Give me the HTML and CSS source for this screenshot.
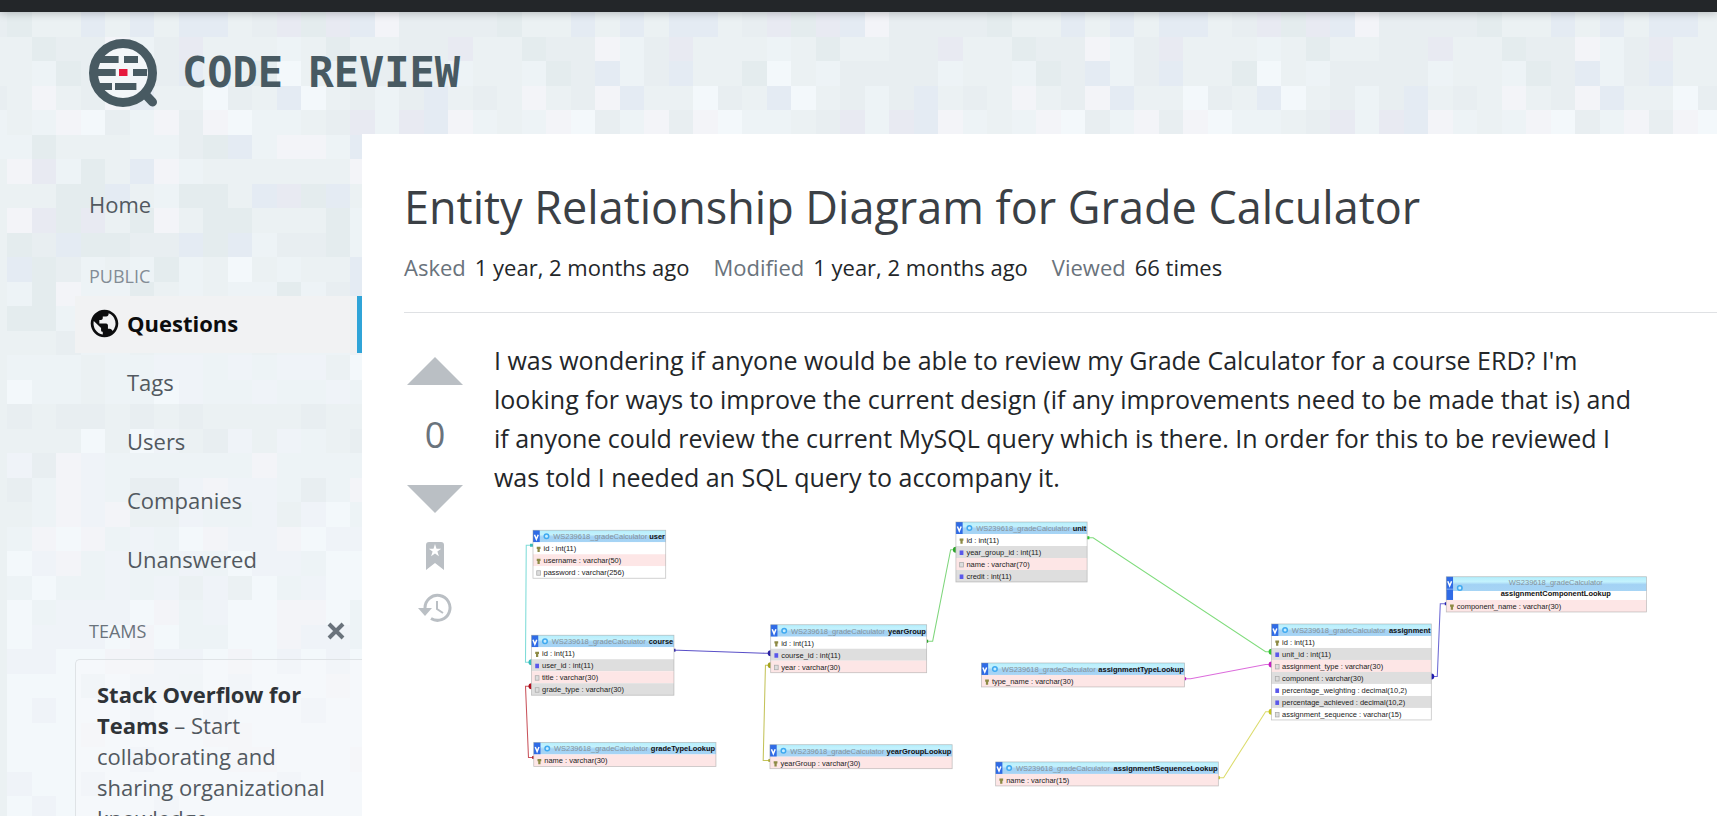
FILE: index.html
```html
<!DOCTYPE html>
<html lang="en">
<head>
<meta charset="utf-8">
<title>Entity Relationship Diagram for Grade Calculator - Code Review</title>
<link rel="stylesheet" href="styles.css">
</head>
<body>
<div class="page">
  <svg class="mosaic" id="mosaic" aria-hidden="true"></svg>
  <div class="topbar"></div>
  <header class="site-header">
    <a class="brand" href="#">
      <svg class="brand-mark" viewBox="0 0 70 70" aria-hidden="true">
        <path d="M57 56l7.500 8" stroke="#485a62" stroke-width="9" stroke-linecap="round"/>
        <circle cx="35" cy="35" r="29.500" fill="#f3f6f9" stroke="#485a62" stroke-width="9"/>
        <g fill="#485a62">
          <path d="M10 18h20.600v7H8zM36 18h14v7H36zM6 31h21.700v7H6zM45 31h14v7H45zM9 45h15v7H13zM27 45h21.400v7H27z"/>
        </g>
        <path d="M31 31h8.500v7H31z" fill="#e6193e"/>
      </svg>
      <span>CODE REVIEW</span>
    </a>
  </header>
  <div class="columns">
    <aside class="sidebar">
      <nav class="nav">
        <a class="nav-home" href="#">Home</a>
        <h2 class="nav-heading">PUBLIC</h2>
        <a class="nav-item nav-current" href="#">
          <svg class="globe" viewBox="0 0 18 18" aria-hidden="true"><path fill="#0c0d0e" d="M9 1C4.640 1 1 4.640 1 9c0 4.360 3.640 8 8 8 4.360 0 8-3.640 8-8 0-4.360-3.640-8-8-8zM8 15.320a6.460 6.460 0 0 1-4.300-2.740 6.460 6.460 0 0 1-.93-5.010L7 11.680v.8c0 .88.120 1.320 1 1.320v1.520zm5.720-2c-.2-.66-1-1.320-1.720-1.320h-1v-2c0-.44-.56-1-1-1H6V7h1c.440 0 1-.56 1-1V5h2c.880 0 1.400-.720 1.400-1.600v-.33a6.450 6.450 0 0 1 3.830 4.510 6.450 6.450 0 0 1-1.510 5.730v.01z"/></svg>
          <span>Questions</span></a>
        <a class="nav-item" href="#">Tags</a>
        <a class="nav-item" href="#">Users</a>
        <a class="nav-item" href="#">Companies</a>
        <a class="nav-item" href="#">Unanswered</a>
      </nav>
      <div class="teams-head">
        <h2 class="teams-title">TEAMS</h2>
        <button class="close" type="button" aria-label="Close"><svg viewBox="0 0 18 18" aria-hidden="true"><path d="M2 2l14 14M16 2L2 16" stroke="#6a737c" stroke-width="4"/></svg></button>
      </div>
      <p class="teams-card"><strong>Stack Overflow for Teams</strong> – Start collaborating and sharing organizational knowledge.</p>
    </aside>
    <main class="content">
      <h1>Entity Relationship Diagram for Grade Calculator</h1>
      <dl class="meta">
        <div><dt>Asked</dt><dd>1 year, 2 months ago</dd></div>
        <div><dt>Modified</dt><dd>1 year, 2 months ago</dd></div>
        <div><dt>Viewed</dt><dd>66 times</dd></div>
      </dl>
      <div class="post">
        <div class="votes">
          <button class="vote" type="button" aria-label="Up vote"><svg width="56" height="28" viewBox="0 0 56 28"><path fill="#babfc4" d="M0 28h56L28 0z"/></svg></button>
          <span class="score">0</span>
          <button class="vote" type="button" aria-label="Down vote"><svg width="56" height="28" viewBox="0 0 56 28"><path fill="#babfc4" d="M0 0h56L28 28z"/></svg></button>
          <button class="vote save" type="button" aria-label="Save"><svg width="18" height="28" viewBox="0 0 18 28"><path fill="#babfc4" fill-rule="evenodd" d="M3 0h12q3 0 3 3v25l-9-7-9 7V3q0-3 3-3zM9 2L7.500 6.800H2.800l3.800 2.800-1.500 4.700L9 11.400l3.900 2.900-1.500-4.700 3.800-2.800h-4.700z"/></svg></button>
          <button class="vote history" type="button" aria-label="Timeline"><svg width="34" height="30" viewBox="0 0 34 30" fill="none" stroke="#babfc4"><path stroke-width="3" d="M7 15A12.500 12.500 0 1 1 13 25.500"/><path stroke-width="2" d="M19 8v8l6 4"/><path fill="#babfc4" stroke="none" d="M0 15h14l-7 8z"/></svg></button>
        </div>
        <div class="body">
          <p>I was wondering if anyone would be able to review my Grade Calculator for a course ERD? I'm<br>looking for ways to improve the current design (if any improvements need to be made that is) and<br>if anyone could review the current MySQL query which is there. In order for this to be reviewed I<br>was told I needed an SQL query to accompany it.</p>
          <svg class="erd" id="erd" viewBox="0 0 1547 379" role="img" aria-label="Entity relationship diagram"></svg>
        </div>
      </div>
    </main>
  </div>
</div>
<script src="page.js"></script>
</body>
</html>
```

FILE: styles.css
```css
* { box-sizing: border-box; }
body {
  margin: 0;
  font-family: "Open Sans", "Noto Sans", sans-serif;
  font-size: 22px;
  color: #232629;
  background: #f3f7fb;
}
h1, h2, p, dl, dd { margin: 0; font-weight: 400; }
a { color: inherit; text-decoration: none; }
button { padding: 0; border: 0; background: none; display: block; }
svg { display: block; }

.page { position: relative; height: 100vh; overflow: hidden; display: flex; flex-direction: column; }
.mosaic { position: absolute; left: 0; top: 0; width: 100%; height: 100%; }
.topbar { position: relative; flex: none; height: 12px; background: #232629; box-shadow: 0 1px 8px rgba(12, 13, 14, .25); }
.site-header { position: relative; flex: none; height: 122px; padding: 26px 88px; }
.brand { display: flex; align-items: center; gap: 24px; color: #485a62; font: bold 42px/66px "DejaVu Sans Mono", monospace; }
.brand-mark { width: 70px; height: 70px; }

.columns { position: relative; flex: 1; display: flex; min-height: 0; }
.sidebar { flex: none; width: 362px; padding: 41px 0 0 75px; color: #525960; }
.nav { display: flex; flex-direction: column; }
.nav-home { padding-left: 14px; line-height: 58px; }
.nav-heading { padding: 28px 0 5px 14px; font-size: 18px; line-height: 30px; color: #838c95; }
.nav-item { padding: 0 0 2px 52px; line-height: 55px; margin-bottom: 2px; }
.nav-current { display: flex; align-items: center; gap: 7px; padding-left: 14px; background: #f1f2f3; border-right: 5px solid #30a4d8; color: #0c0d0e; font-weight: 700; }
.globe { width: 31px; height: 31px; }
.teams-head { display: flex; justify-content: space-between; align-items: center; padding: 24px 17px 12px 14px; }
.teams-title { font-size: 18px; line-height: 32px; color: #6a737c; }
.close svg { width: 18px; height: 18px; }
.teams-card { padding: 19px 24px 20px 21px; border: 1px solid #dfe3e6; border-right: 0; border-radius: 5px 0 0 0; line-height: 31px; background: rgba(248, 250, 252, .35); }
.teams-card strong { color: #2f3337; }

.content { flex: 1; min-width: 0; background: #fff; padding: 40px 0 0 42px; }
h1 { font-size: 45px; line-height: 66px; color: #3b4045; white-space: nowrap; }
.meta { display: flex; gap: 24px; padding: 11px 0 29px; border-bottom: 1px solid #dfe1e4; line-height: 32px; }
.meta div { display: flex; gap: 9px; }
.meta dt { color: #6a737c; }
.post { display: flex; gap: 28px; padding-top: 28px; }
.votes { flex: none; width: 62px; display: flex; flex-direction: column; align-items: center; padding-top: 16px; }
.score { font-size: 36px; line-height: 50px; padding: 25px 0; color: #6a737c; }
.save { margin-top: 29px; }
.history { margin-top: 23px; }
.body { flex: 1; min-width: 0; padding-right: 63px; }
.body p { font-size: 25px; line-height: 39px; white-space: nowrap; }
.erd { width: 100%; margin-top: 19px; font-family: "Liberation Sans", sans-serif; font-size: 10px; }
.erd .schema { fill: #84929a; }
.erd .name { font-weight: 700; fill: #111; }
.erd .field { fill: #222; }
```

FILE: page.js
```js
const NS = 'http://www.w3.org/2000/svg';
function add(parent, tag, attrs, text) {
  const el = document.createElementNS(NS, tag);
  for (const k in attrs) el.setAttribute(k, attrs[k]);
  if (text) el.textContent = text;
  parent.appendChild(el);
  return el;
}

// Background mosaic: one letter per tile, each row repeats every 20 tiles.
const tones = { a: '#ebf1f3', b: '#e8eef1', c: '#e4ecee', d: '#e4ebf3', e: '#e8eaf2', f: '#f3f4f8', g: '#f3f8fb', h: '#edf3f6', p: '#eff3f8' };
const rows = [
  'caadadaddabecedfbbbb', 'acbbfhbeaaahacaabbea', 'ahcbdhbdaacgahbbbbha', 'afabfdaagbadgabhbdab', 'ahfgbhfbfghhabehedfh',
  'hcaaahhbcdhffhdaabah', 'fehcadfhaaaaaafaaaba', 'aaccdahccadecdacabaa', 'feceacfaccaaachaabaa', 'cbdccbbdcdhbbchbaaaa',
  'dcbhahchagahaadaaaaa', 'hcfhhcahahhchbdaaaaa', 'cchhahhahhhhhahaaaaa', 'aabhhahhhhahhhhaaaaa', 'hhhahhpphphppagaaaaa',
  'ghhahhgphhphhphaaaaa', 'babbababaaaabaaaaaaa', 'aaagagpabpaphabaaaaa', 'pbfphhhhhhfhhhhaaaaa', 'bhfphbbpfpphbhfaaaaa',
  'ahfpfaaphhpapghaaaaa', 'hfgfhphgfppfgppaaaaa', 'gpfhphhphgpphggaaaaa', 'hghhphpapaghpggaaaaa', 'ghpppgfhpggffghaaaaa',
  'gpppgfghhggfpphaaaaa', 'ppggffppgfgpgpgaaaaa', 'ggghgpphgpgggfgaaaaa', 'gpgggpggpgggpggaaaaa', 'gggfggggffgggggaaaaa',
  'gggggpgggffgggfaaaaa', 'pggpgggggggpgggaaaaa', 'gpggggpgggggggggaaaa'
];
const mosaic = document.getElementById('mosaic');
const tile = 24.5;
rows.forEach((row, r) => {
  const count = Math.ceil(innerWidth / tile) + 1;
  for (let k = -1; k < count; k++) {
    add(mosaic, 'rect', { x: Math.round(7.3 + k * tile), y: Math.round(12 + r * tile), width: 25, height: 25, fill: tones[row[(k + 20) % 20]] });
  }
});

// Entity diagram. Field prefixes: k = key, n = number, t = text; fill: w, g, r.
const erd = document.getElementById('erd');
const defs = add(erd, 'defs', {});
const grad = add(defs, 'linearGradient', { id: 'head', x1: 0, y1: 0, x2: 0, y2: 1 });
add(grad, 'stop', { offset: 0, 'stop-color': '#b4eefc' });
add(grad, 'stop', { offset: .35, 'stop-color': '#c4f2fd' });
add(grad, 'stop', { offset: .55, 'stop-color': '#a3d2f4' });
add(grad, 'stop', { offset: 1, 'stop-color': '#a6d4f5' });
const fills = { w: '#fff', g: '#dedede', r: '#fde6e6' };
const tables = [
  [52, 19, 177, 'user', ['kwid : int(11)', 'krusername : varchar(50)', 'twpassword : varchar(256)']],
  [50, 159, 190, 'course', ['kwid : int(11)', 'nguser_id : int(11)', 'trtitle : varchar(30)', 'tggrade_type : varchar(30)']],
  [53, 302, 243, 'gradeTypeLookup', ['krname : varchar(30)']],
  [369, 145, 208, 'yearGroup', ['kwid : int(11)', 'ngcourse_id : int(11)', 'tryear : varchar(30)']],
  [368, 305, 243, 'yearGroupLookup', ['kryearGroup : varchar(30)']],
  [616, 8, 175, 'unit', ['kwid : int(11)', 'ngyear_group_id : int(11)', 'trname : varchar(70)', 'ngcredit : int(11)']],
  [650, 196, 271, 'assignmentTypeLookup', ['krtype_name : varchar(30)']],
  [669, 328, 297, 'assignmentSequenceLookup', ['krname : varchar(15)']],
  [1037, 144, 213, 'assignment', ['kwid : int(11)', 'ngunit_id : int(11)', 'trassignment_type : varchar(30)', 'tgcomponent : varchar(30)', 'nwpercentage_weighting : decimal(10,2)', 'ngpercentage_achieved : decimal(10,2)', 'twassignment_sequence : varchar(15)']],
  [1270, 81, 267, 'assignmentComponentLookup', ['krcomponent_name : varchar(30)'], true]
];
const links = [
  ['#7fdcd8', '50,39 43,39 42,195 50,195', 50, 195, '#35bcbc'],
  ['#c9545c', '53,322 46,322 42,227 50,227', 50, 227, '#b00d1c'],
  ['#5a50c8', '240,179 246,179 361,183 369,183', 369, 183, '#2a20a0'],
  ['#c4c35a', '368,326 359,326 362,199 369,199', 369, 199, '#a5a31c'],
  ['#7fd67c', '577,167 585,167 609,45 616,45', 616, 45, '#2da52a'],
  ['#7fdc7c', '792,29 799,29 1029,181 1037,181', 1037, 181, '#35c432'],
  ['#dc6cdc', '921,217 929,217 1029,198 1037,198', 1037, 198, '#c41cc0'],
  ['#dcdc6c', '966,349 973,349 1029,261 1037,261', 1037, 261, '#c4c41c'],
  ['#6c68d4', '1270,117 1262,117 1258,214 1250,214', 1250, 214, '#201cb0']
];
for (const [stroke, points, cx, cy, dot] of links) {
  add(erd, 'polyline', { points, fill: 'none', stroke, 'stroke-width': 1.4 });
  add(erd, 'circle', { cx, cy, r: 4, fill: dot });
  const [sx, sy] = points.split(' ')[0].split(',');
  add(erd, 'rect', { x: sx - 2, y: sy - 2, width: 4, height: 4, fill: dot });
}
for (const [x, y, w, name, fields, tall] of tables) {
  const head = tall ? 31 : 16;
  const blue = tall ? 19 : 16;
  const h = head + fields.length * 16;
  add(erd, 'rect', { x, y, width: w, height: h, fill: '#fff' });
  add(erd, 'rect', { x, y, width: w, height: blue, fill: 'url(#head)' });
  add(erd, 'rect', { x, y, width: 9, height: head, fill: '#2f6be6' });
  add(erd, 'path', { d: `M${x + 2} ${y + 6}l2.500 6 2.500-6`, fill: 'none', stroke: '#fff', 'stroke-width': 2 });
  add(erd, 'circle', { cx: x + 18, cy: y + (tall ? 15 : 8), r: 3, fill: '#c8ecff', stroke: '#3fa9f0', 'stroke-width': 2 });
  if (tall) {
    add(erd, 'rect', { x, y: y + 16, width: 9, height: 1, fill: '#9cc4f5' });
    add(erd, 'text', { x: x + 146, y: y + 11, 'text-anchor': 'middle', class: 'schema' }, 'WS239618_gradeCalculator');
    add(erd, 'text', { x: x + 146, y: y + 26, 'text-anchor': 'middle', class: 'name' }, name);
  } else {
    add(erd, 'text', { x: x + 27, y: y + 12, class: 'schema' }, 'WS239618_gradeCalculator');
    add(erd, 'text', { x: x + w - 1, y: y + 12, 'text-anchor': 'end', class: 'name' }, name);
  }
  fields.forEach((f, i) => {
    const top = y + head + i * 16;
    add(erd, 'rect', { x, y: top, width: w, height: 16, fill: fills[f[1]] });
    if (f[0] === 'k') {
      add(erd, 'path', { d: `M${x + 5} ${top + 6}h5v3h-1v4h-3v-4h-1z`, fill: '#8d8a45' });
    } else if (f[0] === 'n') {
      add(erd, 'rect', { x: x + 5, y: top + 6, width: 5, height: 6, fill: '#5a58ea' });
    } else {
      add(erd, 'rect', { x: x + 5, y: top + 6, width: 5, height: 6, fill: '#ddd', stroke: '#aaa' });
    }
    add(erd, 'text', { x: x + 14, y: top + 12, class: 'field' }, f.slice(2));
  });
  add(erd, 'rect', { x, y, width: w, height: h, fill: 'none', stroke: '#999', 'stroke-opacity': .6 });
}
```
